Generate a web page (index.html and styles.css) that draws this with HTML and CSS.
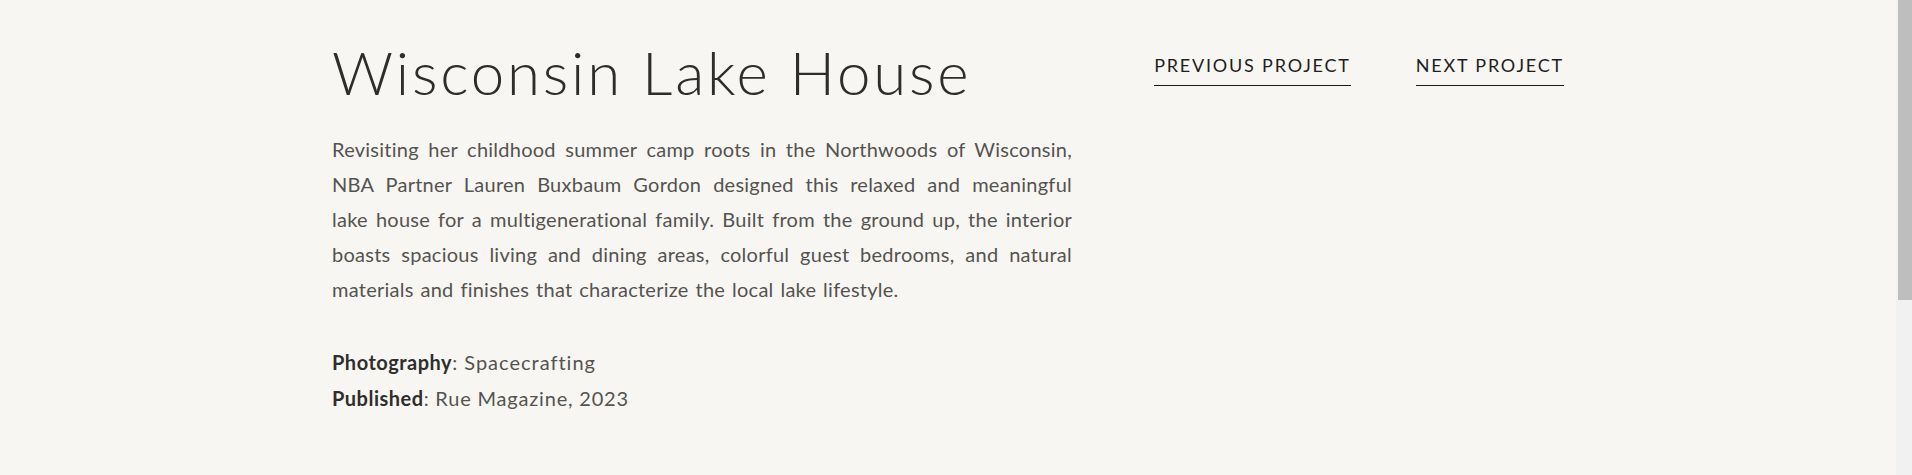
FILE: index.html
```html
<!DOCTYPE html>
<html lang="en">
<head>
<meta charset="utf-8">
<title>Wisconsin Lake House</title>
<link rel="stylesheet" href="styles.css">
</head>
<body>
<main class="project">
  <section class="project-main">
    <h1 class="project-title">Wisconsin Lake House</h1>
    <p class="project-desc"><span class="line">Revisiting her childhood summer camp roots in the Northwoods of Wisconsin,</span> <span class="line">NBA Partner Lauren Buxbaum Gordon designed this relaxed and meaningful</span> <span class="line">lake house for a multigenerational family. Built from the ground up, the interior</span> <span class="line">boasts spacious living and dining areas, colorful guest bedrooms, and natural</span> <span class="line">materials and finishes that characterize the local lake lifestyle.</span></p>
    <div class="project-meta">
      <p><strong>Photography</strong>: Spacecrafting</p>
      <p><strong>Published</strong>: Rue Magazine, 2023</p>
    </div>
  </section>
  <nav class="project-nav">
    <a href="#" class="nav-link">PREVIOUS PROJECT</a>
    <a href="#" class="nav-link">NEXT PROJECT</a>
  </nav>
</main>
<div class="scrollbar" aria-hidden="true"><div class="scrollbar-thumb"></div></div>
</body>
</html>
```
FILE: styles.css
```css
html {
  background: #f7f6f2;
  overflow: hidden;
}
body {
  margin: 0 16px 0 0;
  background: #f7f6f2;
  font-family: "Lato", "Liberation Sans", sans-serif;
  color: #55534f;
}
.project {
  width: 1232px;
  margin: 0 auto;
  display: grid;
  grid-template-columns: 740px 1fr;
  column-gap: 80px;
  padding-top: 36px;
}
.project-title {
  margin: 0;
  font-size: 60px;
  line-height: 72px;
  font-weight: 300;
  letter-spacing: 2.8px;
  color: #2e2d2b;
}
.project-desc {
  margin: 24px 0 0;
  font-size: 20px;
  line-height: 35px;
  font-weight: 400;
  letter-spacing: 0.25px;
  word-spacing: 1.5px;
}
.project-desc .line {
  display: block;
  text-align: justify;
  text-align-last: justify;
  white-space: nowrap;
}
.project-desc .line:last-child {
  text-align-last: left;
}
.project-meta {
  margin-top: 37px;
}
.project-meta p {
  margin: 0;
  font-size: 20px;
  line-height: 36px;
  font-weight: 400;
  letter-spacing: 0.8px;
}
.project-meta p:first-child {
  letter-spacing: 1px;
}
.project-meta strong {
  font-weight: 700;
  letter-spacing: 0.5px;
  color: #2f2e2c;
}
.project-nav {
  display: flex;
  justify-content: flex-end;
  align-items: flex-start;
  gap: 65px;
  padding-top: 17px;
}
.nav-link {
  font-size: 18px;
  line-height: 24px;
  letter-spacing: 1.8px;
  color: #1e1e1e;
  text-decoration: none;
  padding-bottom: 8px;
  border-bottom: 1px solid #1a1a1a;
}
.scrollbar {
  position: fixed;
  top: 0;
  right: 0;
  width: 16px;
  height: 100%;
  background: #f1f1f1;
}
.scrollbar-thumb {
  margin-left: 2px;
  height: 300px;
  background: #bebebe;
}
```
